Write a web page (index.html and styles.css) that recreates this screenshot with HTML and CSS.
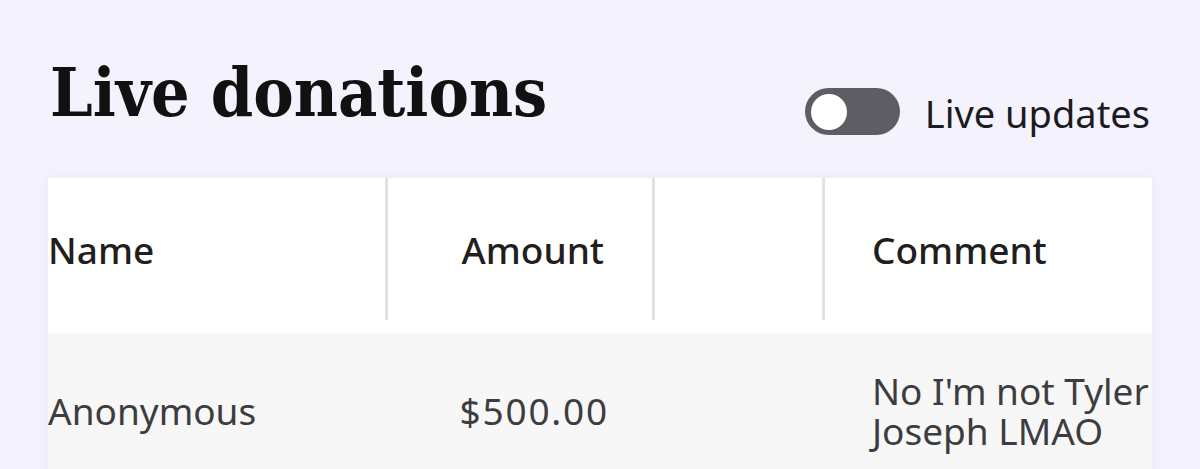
FILE: index.html
```html
<!DOCTYPE html>
<html lang="en">
<head>
<meta charset="utf-8">
<title>Live donations</title>
<link rel="stylesheet" href="styles.css">
</head>
<body>
<main class="page">
  <header class="topbar">
    <h1 class="title">Live donations</h1>
    <label class="live">
      <span class="switch"><span class="knob"></span></span>
      <span class="live-label">Live updates</span>
    </label>
  </header>
  <section class="table">
    <div class="row head">
      <div class="cell c-name"><span>Name</span></div>
      <div class="cell c-amount"><span>Amount</span></div>
      <div class="cell c-blank"></div>
      <div class="cell c-comment"><span>Comment</span></div>
    </div>
    <div class="row body">
      <div class="cell c-name">Anonymous</div>
      <div class="cell c-amount">$500.00</div>
      <div class="cell c-blank"></div>
      <div class="cell c-comment">No I'm not Tyler<br>Joseph LMAO</div>
    </div>
  </section>
</main>
</body>
</html>
```
FILE: styles.css
```css
* { box-sizing: border-box; }
html, body { margin: 0; padding: 0; }
body {
  background: #f4f3fd;
  font-family: "Noto Sans", "Open Sans", sans-serif;
  overflow: hidden;
}
.page {
  padding: 50px 48px 0 48px;
}
.topbar {
  display: flex;
  justify-content: space-between;
  align-items: flex-start;
}
.title {
  margin: 0;
  font-family: "DejaVu Serif", "Liberation Serif", serif;
  font-stretch: condensed;
  font-weight: 700;
  font-size: 67.5px;
  line-height: 80px;
  padding-top: 3px;
  color: #111;
  padding-left: 2px;
}
.live {
  display: flex;
  align-items: flex-start;
  gap: 25px;
  margin-top: 38px;
  margin-right: 2px;
}
.switch {
  width: 95px;
  height: 47px;
  border-radius: 24px;
  background: #5e5c64;
  display: flex;
  align-items: center;
  padding-left: 6px;
}
.knob {
  width: 36px;
  height: 36px;
  border-radius: 50%;
  background: #fff;
}
.live-label {
  font-size: 38px;
  line-height: 43px;
  color: #1c1c1e;
  padding-top: 4px;
}
.table {
  margin-top: 43px;
  background: #fff;
  box-shadow: 0 2px 14px rgba(90, 80, 170, 0.09);
}
.row {
  display: grid;
  grid-template-columns: 340px 267px 170px 327px;
}
.head {
  background: #fff;
  padding-bottom: 13px;
  color: #1f1f21;
  font-weight: 500;
}
.head .cell {
  height: 142px;
  display: flex;
  align-items: center;
  font-size: 37px;
}
.head .c-name, .head .c-amount, .head .c-blank {
  border-right: 3px solid #e2e2e4;
}
.body {
  background: #f7f7f7;
  color: #3d3d40;
  min-height: 155px;
}
.body .cell {
  display: flex;
  align-items: center;
  font-size: 37px;
  line-height: 40px;
  padding-top: 36px;
  padding-bottom: 36px;
}
.c-name { padding-left: 0; }
.c-amount { justify-content: flex-end; padding-right: 48px; }
.body .c-amount { letter-spacing: 1.8px; padding-right: 46px; }
.c-comment { padding-left: 47px; white-space: nowrap; }
```
